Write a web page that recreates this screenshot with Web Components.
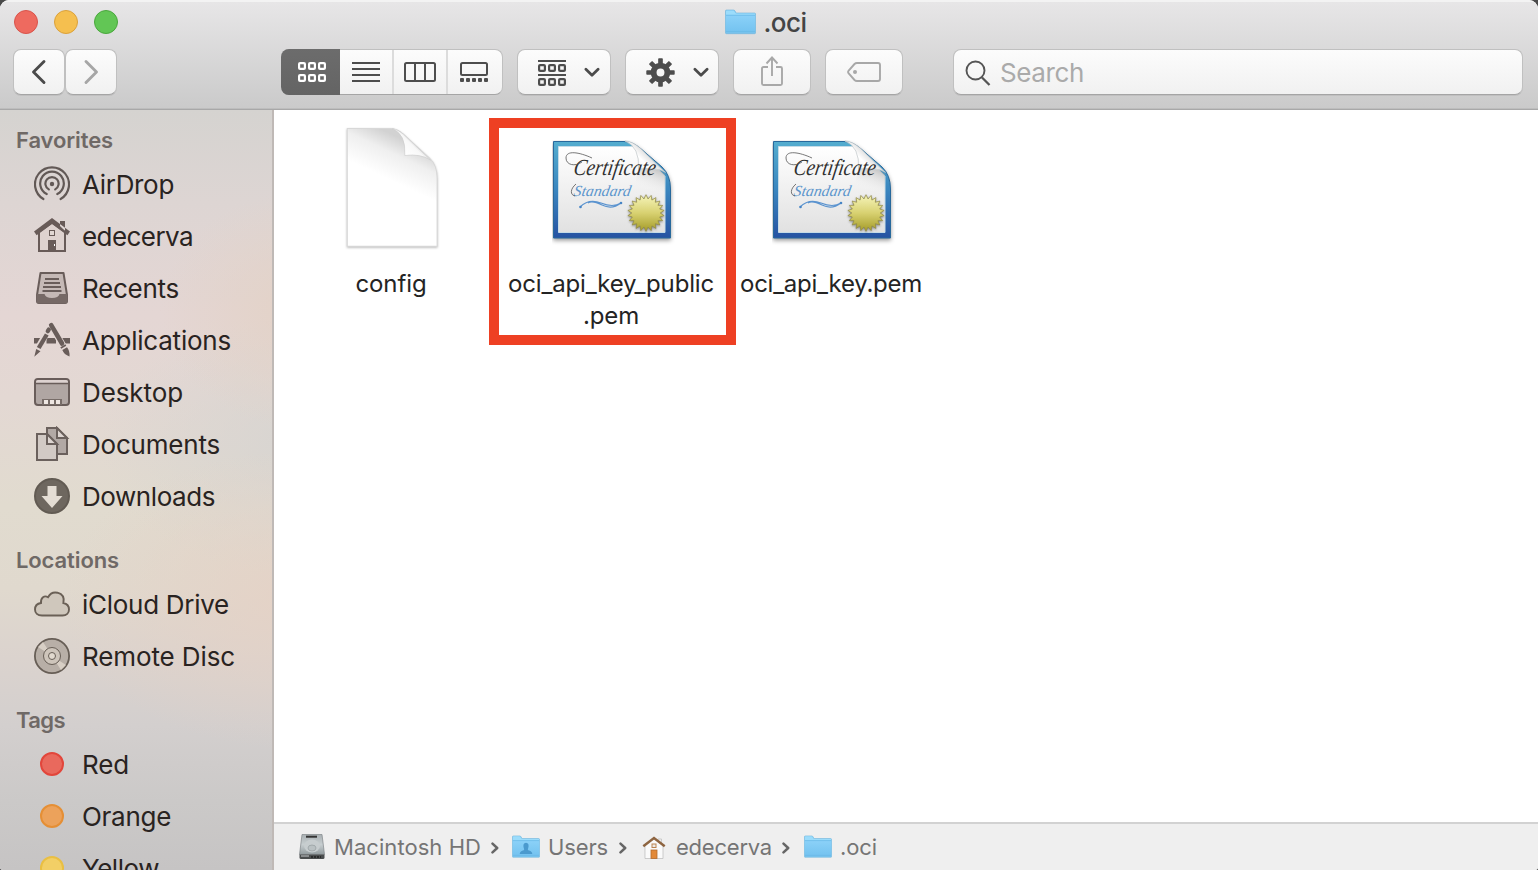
<!DOCTYPE html>
<html lang="en">
<head>
<meta charset="utf-8">
<title>.oci</title>
<style>
html,body{margin:0;height:100%;background:#4a4a4a;overflow:hidden}
body{font-family:Inter,"Liberation Sans",sans-serif;-webkit-font-smoothing:antialiased}
</style>
</head>
<body>
<finder-window></finder-window>
<script>
const define = (name, html, setup) => customElements.define(name, class extends HTMLElement {
  connectedCallback() {
    if (this.shadowRoot) return;
    const t = document.createElement('template');
    t.innerHTML = typeof html === 'function' ? html(this) : html;
    this.attachShadow({mode: 'open'}).append(t.content.cloneNode(true));
    if (setup) setup(this);
  }
});

const folder = (inner = '') => `<svg width="31" height="26" viewBox="0 0 31 26">
<defs><linearGradient id="f" x2="0" y2="1"><stop stop-color="#8bd1f8"/><stop offset="1" stop-color="#74c3f0"/></linearGradient></defs>
<path d="M.5 24V2Q.5 1 1.5 1H8.500q1 0 1.500 1l.8 1.500q.3.500 1.200.500H29.500q1 0 1 1V24q0 .7-1 .7H1.500Q.5 24.700.5 24Z" fill="#78c4ee" stroke="#6cb4dc" stroke-width=".6"/>
<path d="M1 6V2.200q0-.7.700-.7H8.300q.7 0 1.200.9l.7 1.300q.4.800 1.400.800H30V6Z" fill="#9bdcfb"/>
<path d="M.8 6.300H30.200V22.500H.8Z" fill="url(#f)"/><path d="M1 22.600H30M1 6.200H30" stroke="#67b7e7" stroke-width=".7"/>${inner}</svg>`;

const grid = (y, fill) => [0,10,20].map(x => `<rect x="${x+1.1}" y="${y+1.1}" width="5.800" height="5.800" rx="1" fill="none" stroke="${fill}" stroke-width="2.200"/>`).join('');

const seal = () => {
  let p = '';
  for (let i = 0; i < 44; i++) {
    const r = i % 2 ? 14.2 : 18.3, a = i * Math.PI / 22;
    p += (i ? 'L' : 'M') + (94 + r*Math.sin(a)).toFixed(2) + ' ' + (73 - r*Math.cos(a)).toFixed(2);
  }
  return p + 'Z';
};
const gear = () => {
  let teeth = '';
  for (let i = 0; i < 8; i++) teeth += `<rect x="12" y="0.300" width="4.600" height="6" rx=".8" transform="rotate(${i*45} 14.300 14.300)"/>`;
  return `<svg width="29" height="29" viewBox="0 0 28.600 28.600"><g fill="#4d4d4d">${teeth}</g><circle cx="14.300" cy="14.300" r="6.800" fill="none" stroke="#4d4d4d" stroke-width="5.800"/></svg>`;
};

const ICONS = {
  back: `<svg width="16" height="26" viewBox="0 0 16 26"><path d="M13 2.500 2.500 13 13 23.500" fill="none" stroke="#4b4b4b" stroke-width="2.900" stroke-linecap="round" stroke-linejoin="round"/></svg>`,
  forward: `<svg width="16" height="26" viewBox="0 0 16 26"><path d="M3 2.500 13.500 13 3 23.500" fill="none" stroke="#a6a6a6" stroke-width="2.900" stroke-linecap="round" stroke-linejoin="round"/></svg>`,
  grid: `<svg width="28" height="20" viewBox="0 0 28 20">${grid(0,'#fff')}${grid(12,'#fff')}</svg>`,
  list: `<svg width="28" height="20"><path d="M0 1H28M0 7H28M0 13H28M0 19H28" stroke="#4d4d4d" stroke-width="2"/></svg>`,
  columns: `<svg width="32" height="20"><rect x="1" y="1" width="30" height="18" rx="1.500" fill="none" stroke="#4d4d4d" stroke-width="2"/><path d="M11 1V19M21 1V19" stroke="#4d4d4d" stroke-width="2"/></svg>`,
  gallery: `<svg width="28" height="20"><rect x="1" y="1" width="26" height="12" rx="1.500" fill="none" stroke="#4d4d4d" stroke-width="2"/><g fill="#4d4d4d">${[0,6,12,18,24].map(x=>`<rect x="${x}" y="16" width="4" height="4" rx="1"/>`).join('')}</g></svg>`,
  group: `<svg width="28" height="26" viewBox="0 0 28 26"><path d="M0 1H28M0 15H28" stroke="#4d4d4d" stroke-width="2"/>${grid(4,'#4d4d4d')}${grid(18,'#4d4d4d')}</svg>`,
  down: `<svg width="16" height="11"><path d="M1.900 2.200 8 8.300 14.100 2.200" fill="none" stroke="#4b4b4b" stroke-width="2.700" stroke-linecap="round" stroke-linejoin="round"/></svg>`,
  gear: gear(),
  share: `<svg width="22" height="30" viewBox="0 0 22 30"><path d="M7 11H2.500Q1 11 1 12.500V27.500Q1 29 2.500 29H19.500Q21 29 21 27.500V12.500Q21 11 19.500 11H15M11 20V1.500M5.500 7.500 11 1.500 16.500 7.500" fill="none" stroke="#a8a8a8" stroke-width="1.900"/></svg>`,
  tag: `<svg width="34" height="20" viewBox="0 0 34 20"><path d="M10 1H31Q33 1 33 3V17Q33 19 31 19H10Q8.500 19 7.500 18L1.700 11.500Q.5 10 1.700 8.500L7.500 2Q8.500 1 10 1Z" fill="none" stroke="#a8a8a8" stroke-width="1.900"/><circle cx="8" cy="10" r="2" fill="#a8a8a8"/></svg>`,
  search: `<svg width="26" height="26"><circle cx="10.500" cy="10.500" r="9" fill="none" stroke="#555" stroke-width="1.900"/><path d="M17 17.500 24.500 25" stroke="#555" stroke-width="2.300"/></svg>`,
  airdrop: `<svg width="36" height="36" viewBox="0 0 36 36"><g fill="none" stroke="#625956" stroke-width="2.200" stroke-linecap="round"><path d="M9.400 33A17 17 0 1 1 26.600 33M12.700 28A11.800 11.800 0 1 1 23.300 28M14.800 23.400A6.600 6.600 0 1 1 21.200 23.400" /></g><circle cx="18" cy="18" r="2.200" fill="#625956"/></svg>`,
  home: `<svg width="36" height="36" viewBox="0 0 36 36"><path d="M5 14 18 4.500 31 14V33H5Z" fill="#ded2cf" stroke="#685b58" stroke-width="2"/><path d="M26 8V3H31V13ZM18 0 0 13.600 2.600 17.200 18 6 33.400 17.200 36 13.600Z" fill="#685b58"/><path d="M14 22H22V34H14Z" fill="#685b58"/><rect x="15.500" y="12.500" width="5" height="5" fill="#e1d7d3" stroke="#685b58"/><path d="M20.500 26V28" stroke="#fff"/></svg>`,
  recents: `<svg width="36" height="36" viewBox="0 0 36 36"><path d="M6.500 3H29.500L33 25V31Q33 33 31 33H5Q3 33 3 31V25Z" fill="#c5b9b6" stroke="#695d5a" stroke-width="2" stroke-linejoin="round"/><path d="M2.500 24H10.500Q11.500 28 18 28T25.500 24H33.500V31Q33.500 33.500 31 33.500H5Q2.500 33.500 2.500 31Z" fill="#766966"/><path d="M11 9H25M10 13H26M9 17H27M8.500 21H27.500" stroke="#695d5a" stroke-width="1.800"/></svg>`,
  applications: `<svg width="36" height="36" viewBox="0 0 36 36"><path d="M0 18.700H5.600L8.500 18.700M12.500 18.700H22M28 18.700H36" stroke="#695d5a" stroke-width="5.600"/><g stroke="#e3d7d4" fill="none" stroke-width="6.600"><path d="M15.500 6 2.500 29M16.800 3 31 27"/></g><g stroke="#695d5a" fill="none"><path d="M14.800 7.500 13.800 9.200" stroke-width="4.300" stroke-linecap="round"/><path d="M12.800 12.500 4.700 26" stroke-width="4.300"/><path d="M17.200 3.200 28 21.500" stroke-width="4.600" stroke-linecap="round"/><path d="M26.800 26 31.800 23" stroke-width="1.800"/></g><path d="M2.200 27 6.500 29.300.3 34.800ZM28.300 28 33 25.300Q36 29 35.500 34.500 30 32.500 28.300 28Z" fill="#695d5a"/></svg>`,
  desktop: `<svg width="36" height="36" viewBox="0 0 36 36"><rect x="1" y="5" width="34" height="26" rx="3" fill="#b0a6a3" stroke="#695d5a" stroke-width="2"/><path d="M2 9V8Q2 6 4 6H32Q34 6 34 8V9Z" fill="#ddd2d0"/><path d="M1 9.500H35" stroke="#695d5a" stroke-width="1.600"/><path d="M8 25H28V31H8Z" fill="#776c68"/><path d="M10 26H14V30H10ZM16 26H20V30H16ZM22 26H26V30H22Z" fill="#eee6e2"/></svg>`,
  documents: `<svg width="36" height="36" viewBox="0 0 36 36"><g stroke="#6b615d" stroke-width="2"><path d="M13 2H23L33 12V28H13Z" fill="#b2a9a5"/><path d="M23 2V12H33Z" fill="#ddd5d1"/><path d="M3 8H13L23 18V34H3Z" fill="#d2cac5"/><path d="M13 8V18H23Z" fill="#ddd5d1"/></g></svg>`,
  downloads: `<svg width="36" height="36" viewBox="0 0 36 36"><circle cx="18" cy="18" r="17" fill="#6e675f" stroke="#625b53" stroke-width="2"/><path d="M13.500 8H22.500V18H28.500L18 30 7.500 18H13.500Z" fill="#e4ddd4"/></svg>`,
  cloud: `<svg width="36" height="36" viewBox="0 0 36 36"><path d="M8 29.500C3.500 29.500 1 26.800 1 23.500 1 19.500 3.500 17.500 7 17 6.500 11.500 10.500 9 14 11.200 16 7.500 19.500 5.800 23.500 6.700 28.500 8 30.500 12 29.400 17 33 17.800 35 20 35 23.500 35 27 32.500 29.500 28.500 29.500Z" fill="#cfc7bc" stroke="#6a6056" stroke-width="1.900"/></svg>`,
  disc: `<svg width="36" height="36" viewBox="0 0 36 36"><circle cx="18" cy="18" r="17.100" fill="#b8afa7" stroke="#675e56" stroke-width="1.800"/><path d="M18 18 4 9 9 4ZM18 18 32 27 27 32Z" fill="#d8cfc5"/><circle cx="18" cy="18" r="8.500" fill="#cec5bb" stroke="#675e56" stroke-width="1"/><circle cx="18" cy="18" r="3.500" fill="#e1d9ce" stroke="#675e56"/></svg>`,
  folder: folder(),
  users: folder('<path d="M8.500 21Q9 18 13 17 14 16 13 14.500 11.500 9 15.500 8.500 19.500 9 18 14.500 17 16 18 17 22 18 22.500 21Z" fill="#4b9ace"/>'),
  drive: `<svg width="26" height="26" viewBox="0 0 26 26"><defs><linearGradient id="d" x2="0" y2="1"><stop stop-color="#a9b0b3"/><stop offset=".5" stop-color="#c7ced0"/><stop offset="1" stop-color="#929b9e"/></linearGradient></defs><path d="M3 .5H23L25.500 20.500H.5Z" fill="url(#d)" stroke="#818789" stroke-width=".7"/><path d="M.5 20.500H25.500V23.500Q25.500 25 24 25H2Q.5 25 .5 23.500Z" fill="#4a4d4e"/><path d="M7 2.700H18" stroke="#333" stroke-width="2"/><path d="M2 22H10" stroke="#c7cccd"/><path d="M12 23H22" stroke="#202020" stroke-width="1.500" stroke-dasharray="2 1"/><ellipse cx="13" cy="12" rx="8" ry="6.500" fill="#c7cdcf"/><ellipse cx="13" cy="14" rx="4" ry="3" fill="#bac1c3" stroke="#9ba2a5" stroke-width=".8"/></svg>`,
  house: `<svg width="24" height="24" viewBox="0 0 24 24"><path d="M16 3H19.500V10H16Z" fill="#eee" stroke="#bbb" stroke-width=".7"/><path d="M3 9 12 2 21 9V22.500H3Z" fill="#fafafa" stroke="#b9b9b9" stroke-width=".7"/><path d="M1.300 10.300 12 2 22.700 10.300" fill="none" stroke="#8e6541" stroke-width="2.500"/><rect x="10" y="8" width="4" height="3.500" fill="#eceae7" stroke="#bc8450"/><rect x="9" y="14" width="6" height="8.500" fill="#e28938" stroke="#b56b2b" stroke-width=".8"/></svg>`,
  chevron: `<svg width="10" height="12" viewBox="0 0 10 12"><path d="M2.500 1.600 7.200 6 2.500 10.400" fill="none" stroke="#666" stroke-width="2.500" stroke-linecap="round" stroke-linejoin="round"/></svg>`,
  page: `<svg width="128" height="128" viewBox="0 0 128 128"><defs>
<linearGradient id="g" gradientUnits="userSpaceOnUse" x1="80" y1="18" x2="62" y2="56"><stop stop-color="#d2d2d2"/><stop offset=".4" stop-color="#efefef"/><stop offset="1" stop-color="#fff"/></linearGradient>
<linearGradient id="c" gradientUnits="userSpaceOnUse" x1="77" y1="31" x2="88" y2="20"><stop stop-color="#fff"/><stop offset=".75" stop-color="#f8f8f8"/><stop offset="1" stop-color="#dcdcdc"/></linearGradient></defs>
<g transform="translate(.6) scale(1.009 1)"><path d="M19.500 4.500H62Q69 4.500 75 10L101 34Q108.500 41 108.500 54V122.300H19.500Z" fill="url(#g)" stroke="#d8d8d8" stroke-width="1" style="filter:drop-shadow(0 1px 1px #0004)"/>
<path d="M64 4.800Q78 10 76.500 31.500 92 29.500 102 36L75 10Q70 5.500 64 4.800Z" fill="url(#c)" stroke="#cfcfcf" stroke-width=".7"/></g></svg>`,
  certificate: `<svg width="128" height="128" viewBox="0 0 128 128"><defs>
<linearGradient id="b" x2="0" y2="1"><stop stop-color="#54adcf"/><stop offset=".5" stop-color="#3a86bf"/><stop offset="1" stop-color="#2653a2"/></linearGradient>
<linearGradient id="p" x2="0" y2="1"><stop stop-color="#fff"/><stop offset="1" stop-color="#e1e1e1"/></linearGradient>
<linearGradient id="y" x2="0" y2="1"><stop stop-color="#f6f5bb"/><stop offset=".5" stop-color="#d8d171"/><stop offset="1" stop-color="#a49b28"/></linearGradient>
<linearGradient id="c" gradientUnits="userSpaceOnUse" x1="87" y1="29" x2="99" y2="17"><stop stop-color="#f4f4f4"/><stop offset=".5" stop-color="#fff"/><stop offset="1" stop-color="#dedede"/></linearGradient>
<linearGradient id="w" gradientUnits="userSpaceOnUse" x1="100" y1="28" x2="92" y2="50"><stop stop-color="#999" stop-opacity=".5"/><stop offset="1" stop-color="#fff" stop-opacity="0"/></linearGradient></defs>
<path d="M1.500 1.500H72Q80 1.500 88 8L110 27Q118.500 35 118.500 49V98H1.500Z" fill="url(#b)" stroke="#28699c" stroke-width="1" style="filter:drop-shadow(0 2px 2px #0006)"/>
<path d="M6.500 6.500H83L113 36V92.500H6.500Z" fill="url(#p)" stroke="#c6dce7"/>
<path d="M86.500 29Q106 27 113 34V55L82 48Z" fill="url(#w)"/>
<path d="M73 1Q88 7 86.500 29 106 27 113.500 32.500L88 8Q80 1 73 1Z" fill="url(#c)" stroke="#c0c5c8" stroke-width=".7"/>
<g font-family="Liberation Serif,serif" font-style="italic" transform="skewX(-10)"><text x="27" y="35.500" font-size="23" fill="#303030" textLength="82" lengthAdjust="spacingAndGlyphs">Certificate</text>
<text x="31" y="56" font-size="15.500" fill="#5b95cc" textLength="57" lengthAdjust="spacingAndGlyphs">Standard</text></g>
<path d="M30 22C23 27 14 25 14 18 14 10 27 12 40 18M24 44C18 49 18 55 23 56" fill="none" stroke="#555" stroke-width=".8"/>
<path d="M28 67Q37 58 49 63T69 63Q60 70 50 65T36 63" fill="none" stroke="#5a93cf" stroke-width="1.100"/><circle cx="28.500" cy="67" r="1.300" fill="#4684c5"/><circle cx="69" cy="63" r="1.300" fill="#4684c5"/>
<path d="${seal()}" fill="url(#y)" stroke="#8f8842" stroke-width=".7" style="filter:drop-shadow(0 1px 1px #0006)"/></svg>`
};

define('ui-icon', el => `<style>:host{display:block;flex:none;line-height:0}svg{display:block}</style>${ICONS[el.getAttribute('name')]}`,
  el => { const w = el.getAttribute('width'); if (w) { const s = el.shadowRoot.querySelector('svg'); s.setAttribute('height', w * s.getAttribute('height') / s.getAttribute('width')); s.setAttribute('width', w); } });

/* A label whose tracking adapts so that it fills its nominal width. */
define('tracked-label', `<style>:host{display:block;flex:none;white-space:nowrap}span{display:inline-block}</style><span><slot></slot></span>`,
  el => {
    const span = el.shadowRoot.querySelector('span'), w = +el.getAttribute('width');
    span.style.letterSpacing = (w - span.getBoundingClientRect().width) / el.textContent.length + 'px';
    el.style.width = w + 'px';
  });

define('window-lights', `<style>:host{display:flex;gap:16px}i{width:22px;height:22px;border:1px solid;border-radius:50%}
.r{background:#ee6a5f;border-color:#d9534b}.y{background:#f5bf4f;border-color:#dba13b}.g{background:#62c655;border-color:#4aa73d}</style><i class="r"></i><i class="y"></i><i class="g"></i>`);

define('tool-button', `<style>:host{display:flex;align-items:center;justify-content:center;box-sizing:border-box;height:46px;border:1px solid #c0c0c0;border-bottom-color:#a5a5a5;border-radius:8px;background:linear-gradient(#fcfcfc,#f1f1f1);box-shadow:0 1px 0 #0001;flex:none}</style><slot></slot>`);

define('view-switch', `<style>:host{display:flex;box-sizing:border-box;width:222px;height:46px;border:1px solid #c0c0c0;border-bottom-color:#a5a5a5;border-left:0;border-radius:8px;background:linear-gradient(#fcfcfc,#f1f1f1);flex:none}
div{display:flex;align-items:center;justify-content:center;box-sizing:border-box;flex:0 0 54px;border-left:2px solid #dcdcdc}
.on{flex-basis:59px;margin:-1px 0;padding-left:2px;border:0;border-radius:8px 0 0 8px;background:linear-gradient(#6c6c6c,#646464)}
.list{flex-basis:52px;border:0}</style>
<div class="on"><ui-icon name="grid"></ui-icon></div><div class="list"><ui-icon name="list"></ui-icon></div><div><ui-icon name="columns"></ui-icon></div><div><ui-icon name="gallery"></ui-icon></div>`);

define('finder-toolbar', `<style>:host{display:flex;flex-direction:column;box-sizing:border-box;height:110px;background:linear-gradient(#e7e6e7,#cacaca);border-top:2px solid #f3f3f3;border-bottom:1px solid #a8a8a8;box-shadow:inset 0 -1px #bdbdbd}
.title{display:grid;grid-template-columns:1fr auto 1fr;height:47px;align-items:start;box-sizing:border-box}
window-lights{margin:8px 0 0 14px}.name{display:flex;align-items:flex-start;gap:8px;color:#444;font-size:26px;line-height:40px;font-weight:500;margin-left:-7px}.name tracked-label{padding-top:1px}
.name ui-icon{margin-top:7px}
.tools{display:flex;align-items:center;padding:0 15px 0 13px}
.nav{display:flex}.nav tool-button{width:52px}.views{margin-left:164px;display:flex;gap:14px;flex:1}
.drop{width:94px;gap:18px;padding-left:9px}.gear{padding-left:10px}.plain{width:78px}.group{padding-top:1px}
.search{flex:1;justify-content:flex-start;gap:9px;padding:2px 0 0 11px;margin-left:36px;color:#aaa;font-size:26px;line-height:40px}</style>
<div class="title"><window-lights></window-lights><div class="name"><ui-icon name="folder"></ui-icon><tracked-label width="43">.oci</tracked-label></div></div>
<div class="tools"><div class="nav"><tool-button><ui-icon name="back"></ui-icon></tool-button><tool-button><ui-icon name="forward"></ui-icon></tool-button></div>
<div class="views"><view-switch></view-switch><tool-button class="drop group"><ui-icon name="group"></ui-icon><ui-icon name="down"></ui-icon></tool-button>
<tool-button class="drop gear"><ui-icon name="gear"></ui-icon><ui-icon name="down"></ui-icon></tool-button>
<tool-button class="plain" style="padding-bottom:2px"><ui-icon name="share"></ui-icon></tool-button><tool-button class="plain"><ui-icon name="tag"></ui-icon></tool-button>
<tool-button class="search"><ui-icon name="search"></ui-icon><tracked-label width="84">Search</tracked-label></tool-button></div></div>`);

define('side-heading', el => `<style>:host{display:block;padding:20px 0 0 16px;height:36px;line-height:37px;font-size:22px;font-weight:600;color:#6f6966;flex:none}</style><tracked-label width="${el.getAttribute('width')}">${el.getAttribute('text')}</tracked-label>`);

define('side-item', el => {
  const [fill, line] = (el.getAttribute('dot') || '').split(' ');
  return `<style>:host{display:flex;align-items:center;gap:12px;height:52px;padding-left:34px;font-size:26px;line-height:50px;color:#292321;flex:none}
.dot{width:36px;display:flex;justify-content:center}.dot i{box-sizing:border-box;width:24px;height:24px;border-radius:50%;border:2px solid ${line};background:${fill}}tracked-label{padding-top:2px}</style>
${line ? '<span class="dot"><i></i></span>' : `<ui-icon name="${el.getAttribute('icon')}"></ui-icon>`}<tracked-label width="${el.getAttribute('width')}">${el.getAttribute('text')}</tracked-label>`;
});

define('finder-sidebar', `<style>:host{display:flex;flex-direction:column;box-sizing:border-box;width:274px;overflow:hidden;border-right:2px solid #bfb9b6;
background:radial-gradient(ellipse 240px 150px at 300px 490px,#e5d1c5dd,#e5d1c500),radial-gradient(ellipse 150px 120px at 310px 200px,#e3d2c6,#e3d2c600),radial-gradient(ellipse 200px 130px at 300px 335px,#d6d4d1dd,#d6d4d100),linear-gradient(#d5d3d0 0,#ddd5d3 12%,#e4d6d4 27%,#e3d8d3 38%,#e1dbcf 52%,#e0d9ce 63%,#dbd3ce 72%,#d3cfce 81%,#cbc9c8 91%,#c6c4c4)}
side-heading:first-of-type{padding-top:12px}</style>
<side-heading text="Favorites" width="97"></side-heading>
<side-item icon="airdrop" text="AirDrop" width="92"></side-item><side-item icon="home" text="edecerva" width="111"></side-item>
<side-item icon="recents" text="Recents" width="97"></side-item><side-item icon="applications" text="Applications" width="149"></side-item>
<side-item icon="desktop" text="Desktop" width="101"></side-item><side-item icon="documents" text="Documents" width="138"></side-item>
<side-item icon="downloads" text="Downloads" width="133"></side-item>
<side-heading text="Locations" width="103"></side-heading>
<side-item icon="cloud" text="iCloud Drive" width="147"></side-item><side-item icon="disc" text="Remote Disc" width="153"></side-item>
<side-heading text="Tags" width="49"></side-heading>
<side-item dot="#e9695d #e2463b" text="Red" width="47"></side-item><side-item dot="#eca25b #e58f35" text="Orange" width="89"></side-item><side-item dot="#f2cf66 #e9bf43" text="Yellow" width="77"></side-item>`);

define('file-tile', el => `<style>:host{display:flex;flex-direction:column;align-items:center;position:relative;width:220px;flex:none;font-size:24px;line-height:32px;color:#242424}
.art{width:128px;height:128px;margin:14px 0 16px;display:flex}.cert{box-sizing:border-box;padding:16px 0 0 5px}
.mark{position:absolute;left:-12px;top:8px;width:227px;height:207px;border:10px solid #ee4023}</style>
<div class="art ${el.getAttribute('icon') === 'certificate' ? 'cert' : ''}"><ui-icon name="${el.getAttribute('icon')}"></ui-icon></div><slot></slot>${el.hasAttribute('marked') ? '<div class="mark"></div>' : ''}`);

define('path-bar', `<style>:host{display:flex;align-items:center;box-sizing:border-box;height:48px;border-top:2px solid #d2d2d2;background:#efefef;padding:0 0 0 25px;font-size:22px;line-height:40px;color:#757575;flex:none}
tracked-label{margin-left:9px}ui-icon[name=chevron]{margin:2px 12px 0 8px}ui-icon[name=house]{margin-top:2px}</style>
<ui-icon name="drive"></ui-icon><tracked-label width="147">Macintosh HD</tracked-label><ui-icon name="chevron" style="margin-left:9px"></ui-icon>
<ui-icon name="users" width="28"></ui-icon><tracked-label width="60" style="margin-left:8px">Users</tracked-label><ui-icon name="chevron" style="margin-left:10px;margin-right:14px"></ui-icon>
<ui-icon name="house"></ui-icon><tracked-label width="96" style="margin-left:10px">edecerva</tracked-label><ui-icon name="chevron" style="margin-left:9px;margin-right:13px"></ui-icon>
<ui-icon name="folder" width="28"></ui-icon><tracked-label width="37" style="margin-left:8px">.oci</tracked-label>`);

define('finder-window', `<style>:host{display:flex;flex-direction:column;height:870px;width:1538px;border-radius:9px 9px 3px 3px;overflow:hidden;background:#fff}
.body{display:flex;flex:1;min-height:0}.main{display:flex;flex-direction:column;flex:1}.files{display:flex;flex:1;padding-left:7px}</style>
<finder-toolbar></finder-toolbar><div class="body"><finder-sidebar></finder-sidebar><div class="main"><div class="files">
<file-tile icon="page"><tracked-label width="71">config</tracked-label></file-tile>
<file-tile icon="certificate" marked><tracked-label width="206">oci_api_key_public</tracked-label><tracked-label width="56">.pem</tracked-label></file-tile>
<file-tile icon="certificate"><tracked-label width="182">oci_api_key.pem</tracked-label></file-tile>
</div><path-bar></path-bar></div></div>`);
</script>
</body>
</html>
